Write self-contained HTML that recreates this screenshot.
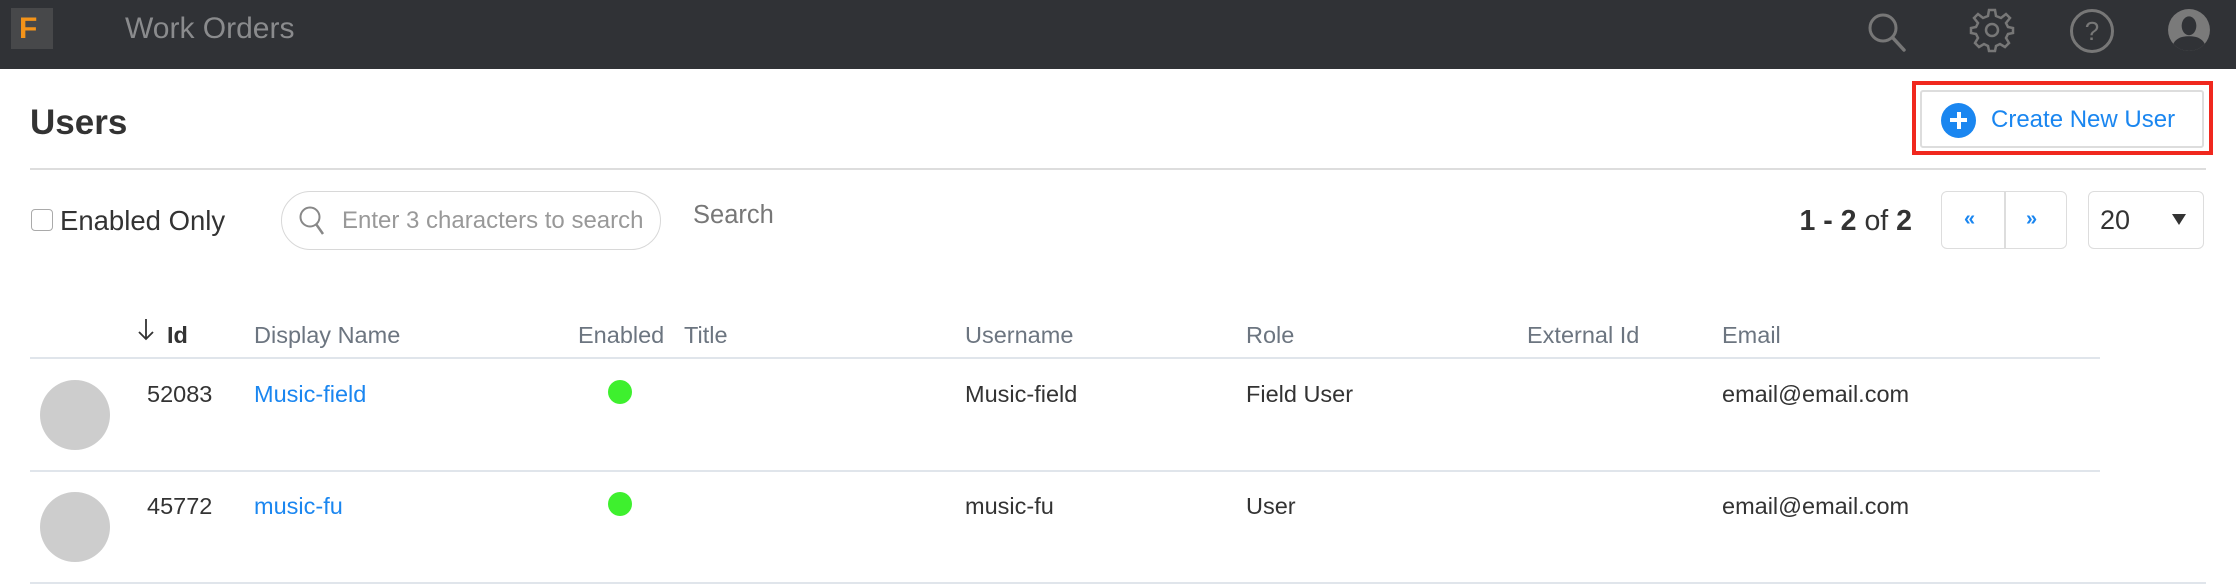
<!DOCTYPE html>
<html><head><meta charset="utf-8"><style>
*{margin:0;padding:0;box-sizing:border-box}
body{width:2236px;height:588px;background:#fff;font-family:"Liberation Sans",Arial,sans-serif;position:relative;overflow:hidden;color:#333}
.a{position:absolute;white-space:nowrap}
.top{position:absolute;left:0;top:0;width:2236px;height:69px;background:#303236}
.h{color:#6c7580;font-size:23.5px;top:322px}
.c{font-size:23.5px;color:#333}
.l{color:#1a86f0}
.av{position:absolute;width:70px;height:70px;border-radius:50%;background:#cdcdcd;left:40px}
.dot{position:absolute;width:24px;height:24px;border-radius:50%;background:#3ef02e;left:608px}
</style></head><body>
<div class="top"></div>
<div class="a" style="left:11px;top:8px;width:42px;height:41px;background:#47484a"></div>
<div class="a" style="left:19px;top:12px;font-size:30px;font-weight:bold;color:#f39319">F</div>
<div class="a" style="left:125px;top:12px;font-size:30px;color:#8a8b8d">Work Orders</div>
<svg class="a" style="left:1866px;top:10px" width="40" height="44" viewBox="0 0 40 44"><circle cx="17" cy="18" r="13" fill="none" stroke="#777" stroke-width="3"/><line x1="27" y1="28" x2="38" y2="40" stroke="#777" stroke-width="3.5" stroke-linecap="round"/></svg>
<svg class="a" style="left:1969px;top:7px" width="46" height="46" viewBox="-23 -23 46 46"><g fill="none" stroke="#777" stroke-width="2.5"><path d="M-3,-20 L3,-20 L4,-14 L9,-12 L14,-16 L18,-12 L14,-7 L16,-3 L21,-2 L21,3 L16,4 L14,8 L17,13 L13,17 L8,14 L4,16 L3,21 L-3,21 L-4,16 L-8,14 L-13,17 L-17,13 L-14,8 L-16,4 L-21,3 L-21,-2 L-16,-3 L-14,-7 L-18,-12 L-14,-16 L-9,-12 L-4,-14 Z"/><circle r="6"/></g></svg>
<svg class="a" style="left:2069px;top:8px" width="46" height="46" viewBox="0 0 46 46"><circle cx="23" cy="23" r="20.5" fill="none" stroke="#777" stroke-width="3"/><text x="23" y="32" text-anchor="middle" font-size="26" fill="#777" font-family="Liberation Sans">?</text></svg>
<svg class="a" style="left:2167px;top:8px" width="44" height="44" viewBox="0 0 42 42"><defs><clipPath id="cp"><circle cx="21" cy="21" r="20"/></clipPath></defs><circle cx="21" cy="21" r="20" fill="#7a7a7a"/><g clip-path="url(#cp)" fill="#303236"><ellipse cx="21" cy="17" rx="7" ry="9"/><path d="M4,42 C5,30 12,27 21,27 C30,27 37,30 38,42Z"/></g></svg>

<div class="a" style="left:30px;top:103px;font-size:35px;font-weight:bold;color:#333">Users</div>
<div class="a" style="left:1912px;top:81px;width:301px;height:74px;border:4px solid #f0281e"></div>
<div class="a" style="left:1920px;top:90px;width:284px;height:58px;border:2px solid #ddd;border-radius:3px;background:#fff"></div>
<div class="a" style="left:1941px;top:103px;width:35px;height:35px;border-radius:50%;background:#1a86f0"></div>
<div class="a" style="left:1950px;top:118px;width:17px;height:4px;background:#fff"></div>
<div class="a" style="left:1956.5px;top:112px;width:4px;height:17px;background:#fff"></div>
<div class="a" style="left:1991px;top:106px;font-size:24px;color:#1a86f0">Create New User</div>
<div class="a" style="left:30px;top:168px;width:2176px;height:2px;background:#ddd"></div>

<div class="a" style="left:31px;top:209px;width:22px;height:22px;border:1.5px solid #aaa;border-radius:4px"></div>
<div class="a" style="left:60px;top:205px;font-size:27.5px;color:#333">Enabled Only</div>
<div class="a" style="left:281px;top:191px;width:380px;height:59px;border:1.5px solid #d8d8d8;border-radius:30px"></div>
<svg class="a" style="left:298px;top:205px" width="28" height="32" viewBox="0 0 28 32"><circle cx="12" cy="12" r="9.5" fill="none" stroke="#888" stroke-width="2"/><line x1="18" y1="19" x2="25" y2="29" stroke="#888" stroke-width="2.5"/></svg>
<div class="a" style="left:342px;top:207px;font-size:24px;color:#999">Enter 3 characters to search</div>
<div class="a" style="left:693px;top:201px;font-size:25.5px;color:#777">Search</div>
<div class="a" style="right:324px;top:205px;font-size:28.5px;color:#333"><b>1 - 2</b> of <b>2</b></div>
<div class="a" style="left:1941px;top:191px;width:126px;height:58px;border:1.5px solid #ddd;border-radius:6px"></div>
<div class="a" style="left:2004px;top:191px;width:1.5px;height:58px;background:#ddd"></div>
<div class="a" style="left:1964px;top:208px;font-size:20px;color:#1a86f0;font-weight:bold">«</div>
<div class="a" style="left:2026px;top:208px;font-size:20px;color:#1a86f0;font-weight:bold">»</div>
<div class="a" style="left:2088px;top:191px;width:116px;height:58px;border:1.5px solid #ddd;border-radius:6px"></div>
<div class="a" style="left:2100px;top:205px;font-size:27px;color:#333">20</div>
<div class="a" style="left:2172px;top:214px;width:0;height:0;border-left:7px solid transparent;border-right:7px solid transparent;border-top:11px solid #333"></div>

<svg class="a" style="left:138px;top:318px" width="16" height="24" viewBox="0 0 16 24"><path d="M8,1 V21 M1,14 L8,21 L15,14" fill="none" stroke="#333" stroke-width="1.8"/></svg>
<div class="a h" style="left:167px;color:#333;font-weight:bold">Id</div>
<div class="a h" style="left:254px">Display Name</div>
<div class="a h" style="left:578px">Enabled</div>
<div class="a h" style="left:684px">Title</div>
<div class="a h" style="left:965px">Username</div>
<div class="a h" style="left:1246px">Role</div>
<div class="a h" style="left:1527px">External Id</div>
<div class="a h" style="left:1722px">Email</div>
<div class="a" style="left:30px;top:357px;width:2070px;height:2px;background:#e0e5eb"></div>

<div class="av" style="top:380px"></div>
<div class="a c" style="left:147px;top:381px">52083</div>
<div class="a c l" style="left:254px;top:381px">Music-field</div>
<div class="dot" style="top:380px"></div>
<div class="a c" style="left:965px;top:381px">Music-field</div>
<div class="a c" style="left:1246px;top:381px">Field User</div>
<div class="a c" style="left:1722px;top:381px">email@email.com</div>
<div class="a" style="left:30px;top:470px;width:2070px;height:2px;background:#e0e5eb"></div>

<div class="av" style="top:492px"></div>
<div class="a c" style="left:147px;top:493px">45772</div>
<div class="a c l" style="left:254px;top:493px">music-fu</div>
<div class="dot" style="top:492px"></div>
<div class="a c" style="left:965px;top:493px">music-fu</div>
<div class="a c" style="left:1246px;top:493px">User</div>
<div class="a c" style="left:1722px;top:493px">email@email.com</div>
<div class="a" style="left:30px;top:582px;width:2176px;height:2px;background:#e0e5eb"></div>
</body></html>
